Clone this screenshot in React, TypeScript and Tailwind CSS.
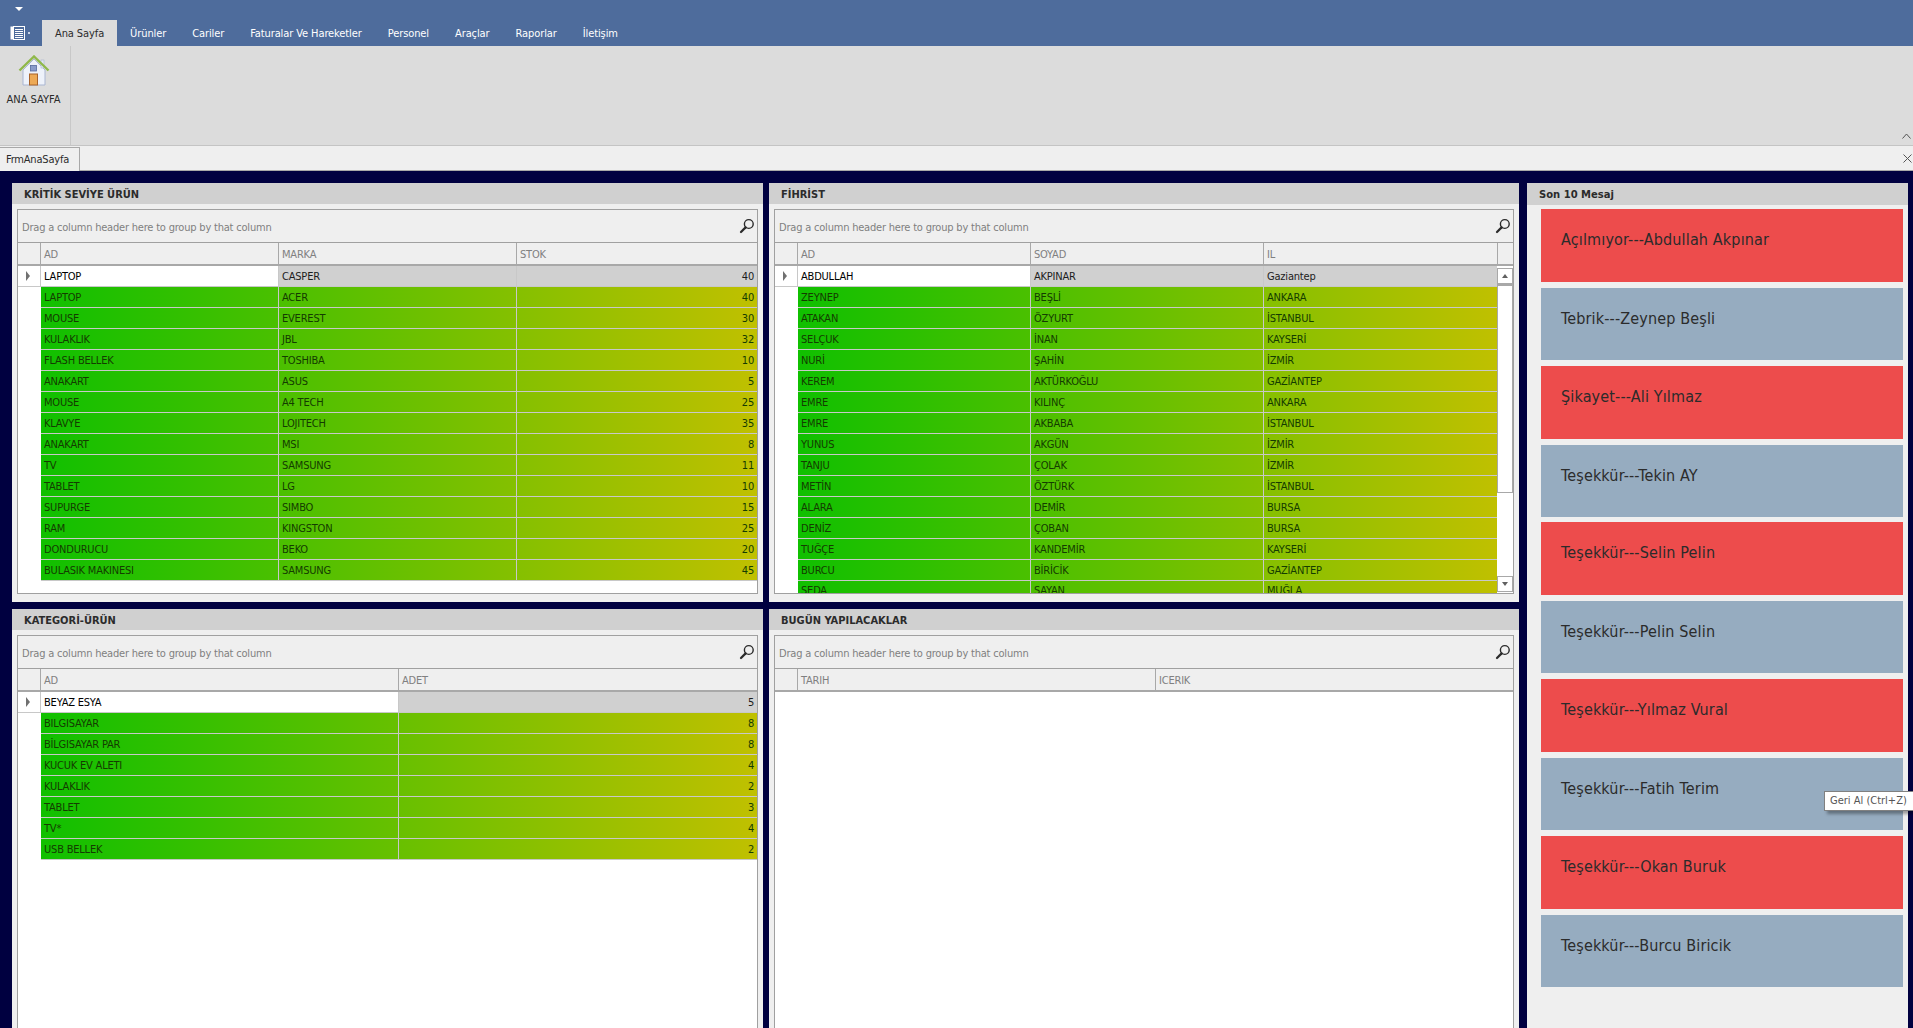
import React from 'react';

const tabs = ['Ürünler', 'Cariler', 'Faturalar Ve Hareketler', 'Personel', 'Araçlar', 'Raporlar', 'İletişim'];

const urunler = [
  ['LAPTOP', 'ACER', '40'], ['MOUSE', 'EVEREST', '30'], ['KULAKLIK', 'JBL', '32'], ['FLASH BELLEK', 'TOSHIBA', '10'],
  ['ANAKART', 'ASUS', '5'], ['MOUSE', 'A4 TECH', '25'], ['KLAVYE', 'LOJITECH', '35'], ['ANAKART', 'MSI', '8'],
  ['TV', 'SAMSUNG', '11'], ['TABLET', 'LG', '10'], ['SUPURGE', 'SIMBO', '15'], ['RAM', 'KINGSTON', '25'],
  ['DONDURUCU', 'BEKO', '20'], ['BULASIK MAKINESI', 'SAMSUNG', '45'],
];

const fihrist = [
  ['ZEYNEP', 'BEŞLİ', 'ANKARA'], ['ATAKAN', 'ÖZYURT', 'İSTANBUL'], ['SELÇUK', 'İNAN', 'KAYSERİ'], ['NURİ', 'ŞAHİN', 'İZMİR'],
  ['KEREM', 'AKTÜRKOĞLU', 'GAZİANTEP'], ['EMRE', 'KILINÇ', 'ANKARA'], ['EMRE', 'AKBABA', 'İSTANBUL'], ['YUNUS', 'AKGÜN', 'İZMİR'],
  ['TANJU', 'ÇOLAK', 'İZMİR'], ['METİN', 'ÖZTÜRK', 'İSTANBUL'], ['ALARA', 'DEMİR', 'BURSA'], ['DENİZ', 'ÇOBAN', 'BURSA'],
  ['TUĞÇE', 'KANDEMİR', 'KAYSERİ'], ['BURCU', 'BİRİCİK', 'GAZİANTEP'],
];

const kategori = [
  ['BILGISAYAR', '8'], ['BİLGISAYAR PAR', '8'], ['KUCUK EV ALETI', '4'], ['KULAKLIK', '2'],
  ['TABLET', '3'], ['TV*', '4'], ['USB BELLEK', '2'],
];

const mesajlar = [
  'Açılmıyor---Abdullah Akpınar', 'Tebrik---Zeynep Beşli', 'Şikayet---Ali Yılmaz', 'Teşekkür---Tekin AY',
  'Teşekkür---Selin Pelin', 'Teşekkür---Pelin Selin', 'Teşekkür---Yılmaz Vural', 'Teşekkür---Fatih Terim',
  'Teşekkür---Okan Buruk', 'Teşekkür---Burcu Biricik',
];

const condensed = "font-['DejaVu_Sans',sans-serif] [font-stretch:condensed]";
const small = `text-[11px] tracking-[-0.2px] ${condensed}`;
const tabText = `text-[11px] tracking-[-0.1px] ${condensed}`;

const SearchIcon = () => (
  <svg width="16" height="16" viewBox="0 0 16 16" fill="none">
    <circle cx="9.8" cy="6" r="4.4" stroke="#2a2a2a" strokeWidth="1.4" />
    <path d="M6.6 9.4 L2 14" stroke="#2a2a2a" strokeWidth="2.2" strokeLinecap="round" />
  </svg>
);

const HomeIcon = () => (
  <svg width="32" height="32" viewBox="0 0 32 32">
    <path d="M5 15 L16 4 L27 15 V30 H5 Z" fill="#eef2fa" stroke="#aab6d2" strokeWidth="1" />
    <rect x="23" y="5" width="3" height="8" fill="#dfe6f2" stroke="#a8b4cc" strokeWidth="0.6" />
    <path d="M1.5 15.5 L16 1.5 L30.5 15.5" fill="none" stroke="#8fb84a" strokeWidth="2.4" />
    <rect x="12.5" y="10.5" width="6" height="5.5" fill="#8a9ccb" stroke="#566a9c" strokeWidth="0.8" />
    <rect x="11.5" y="19" width="8" height="11" fill="#eda955" stroke="#a8622a" strokeWidth="1" />
  </svg>
);

const AppIcon = () => (
  <svg width="15" height="14" viewBox="0 0 15 14" fill="none">
    <rect x="0.5" y="0.5" width="3" height="13" fill="#fff" />
    <rect x="3.5" y="0.5" width="11" height="13" fill="#4e6c9c" stroke="#fff" />
    <path d="M5 3.5 H13 M5 5.5 H13 M5 7.5 H13 M5 9.5 H13 M5 11.5 H13" stroke="#fff" />
  </svg>
);

const Panel = ({ title, children, cls }: { title: string; children: React.ReactNode; cls?: string }) => (
  <div className={`flex min-h-0 flex-col overflow-hidden bg-[#efefef] ${cls ?? ''}`}>
    <div className={`h-[21px] shrink-0 bg-[#d0d0d0] pl-[12px] text-[11px] leading-[23px] font-bold text-[#2b2b2b] ${condensed}`}>
      {title}
    </div>
    {children}
  </div>
);

const GroupBar = () => (
  <div className="flex h-[33px] shrink-0 items-center justify-between border-b border-[#a0a0a0] bg-[#efefef] pr-[2px] pl-[4px]">
    <span className={`mt-[4px] text-[#7f7f7f] ${small}`}>Drag a column header here to group by that column</span>
    <span className="mb-[1px]">
      <SearchIcon />
    </span>
  </div>
);

const Indicator = () => (
  <div className="flex h-full items-center border-r border-[#c8c8c8] bg-white pl-[8px]">
    <span className="h-0 w-0 border-y-[5px] border-l-[4px] border-y-transparent border-l-[#707070]" />
  </div>
);

const Cell = ({ text, cls }: { text: string; cls?: string }) => (
  <div className={`h-full overflow-hidden border-r border-[#c8c8c8] px-[3px] leading-[22px] whitespace-nowrap last:border-r-0 ${small} ${cls ?? ''}`}>
    {text}
  </div>
);

const Header = ({ cols, labels }: { cols: string; labels: string[] }) => (
  <div className={`grid h-[23px] shrink-0 border-b-2 border-[#a8a8a8] bg-[#efefef] ${cols}`}>
    <div className="border-r border-[#a8a8a8]" />
    {labels.map((l, i) => (
      <div key={i} className={`border-r border-[#a8a8a8] pl-[3px] leading-[24px] text-[#808080] last:border-r-0 ${small}`}>
        {l}
      </div>
    ))}
  </div>
);

const Rows = ({ cols, gridCols, first, rows, numeric, tail }: { cols: string; gridCols: string; first: string[]; rows: string[][]; numeric?: boolean; tail?: string[] }) => (
  <div className="min-w-0 flex-1 overflow-hidden">
    <div className={`grid h-[21px] border-b border-[#c8c8c8] ${cols}`}>
      <Indicator />
      {first.map((t, i) => (
        <Cell
          key={i}
          text={t}
          cls={`${i === 0 ? 'bg-white text-black' : 'bg-[#d0d0d0] text-[#1c1c1c]'} ${numeric && i === first.length - 1 ? 'text-right' : ''}`}
        />
      ))}
    </div>
    {rows.map((r, n) => (
      <div key={n} className="flex h-[21px]">
        <div className="w-[23px] shrink-0 bg-white" />
        <div className={`grid flex-1 border-b border-[#c8c8c8] bg-linear-to-r/srgb from-[#10c000] to-[#c0c000] ${gridCols}`}>
          {r.map((t, i) => (
            <Cell key={i} text={t} cls={`text-[#143c00] ${numeric && i === r.length - 1 ? 'text-right' : ''}`} />
          ))}
        </div>
      </div>
    ))}
    {/* last row is only half in view, like in the grid it is scrolled */}
    {tail && (
      <div className="flex h-[13px] overflow-hidden">
        <div className="w-[23px] shrink-0 bg-white" />
        <div className={`grid flex-1 bg-linear-to-r/srgb from-[#10c000] to-[#c0c000] ${gridCols}`}>
          {tail.map((t, i) => (
            <div key={i} className={`h-[13px] border-r border-[#c8c8c8] px-[3px] leading-[20px] text-[#143c00] last:border-r-0 ${small}`}>
              {t}
            </div>
          ))}
        </div>
      </div>
    )}
  </div>
);

const ScrollBar = () => (
  <div className="flex w-[16px] shrink-0 flex-col bg-white pt-[2px] pb-[1px]">
    <div className="flex h-[16px] shrink-0 items-center justify-center border border-[#a8a8a8] bg-white">
      <span className="h-0 w-0 border-x-[3px] border-b-[4px] border-x-transparent border-b-[#606060]" />
    </div>
    <div className="h-[209px] shrink-0 border border-t-2 border-[#a8a8a8] bg-white" />
    <div className="flex-1" />
    <div className="flex h-[16px] shrink-0 items-center justify-center border border-[#a8a8a8] bg-white">
      <span className="h-0 w-0 border-x-[3px] border-t-[4px] border-x-transparent border-t-[#606060]" />
    </div>
  </div>
);

export default function App() {
  return (
    <div className="relative flex h-[1028px] w-[1913px] flex-col overflow-hidden bg-[#000040] font-['DejaVu_Sans',sans-serif]">
      {/* title + ribbon tabs */}
      <div className="h-[46px] shrink-0 bg-[#4e6c9c]">
        <div className="flex h-[20px] pt-[7px] pl-[15px]">
          <span className="h-0 w-0 border-x-[4px] border-t-[4px] border-x-transparent border-t-white" />
        </div>
        <div className="flex h-[26px]">
          <div className="flex w-[42px] items-center gap-[3px] pl-[10px]">
            <AppIcon />
            <span className="h-[2px] w-[2px] bg-[#c8d4e8]" />
          </div>
          <div className={`bg-[#dcdcdc] px-[13px] leading-[28px] text-[#2b2b2b] ${tabText}`}>Ana Sayfa</div>
          {tabs.map((t) => (
            <div key={t} className={`px-[13px] leading-[28px] text-white ${tabText}`}>
              {t}
            </div>
          ))}
        </div>
      </div>

      {/* ribbon */}
      <div className="flex h-[100px] shrink-0 border-b border-[#c4c4c4] bg-[#dcdcdc]">
        <div className="flex w-[71px] flex-col items-center border-r border-[#c8c8c8] pt-[9px] pr-[3px]">
          <HomeIcon />
          <span className={`mt-[5px] text-[11px] text-[#2b2b2b] ${condensed}`}>ANA SAYFA</span>
        </div>
        <div className="flex flex-1 items-end justify-end pr-[2px] pb-[6px]">
          <svg width="9" height="6" viewBox="0 0 9 6" fill="none">
            <path d="M0.5 5.5 L4.5 1 L8.5 5.5" stroke="#555" />
          </svg>
        </div>
      </div>

      {/* document tabs */}
      <div className="flex h-[25px] shrink-0 border-b border-[#a8a8a8] bg-[#efefef] pt-[1px]">
        <div className={`-mb-px w-[80px] border-t border-r border-[#a8a8a8] bg-[#efefef] pl-[6px] leading-[23px] text-[#2b2b2b] ${small}`}>
          FrmAnaSayfa
        </div>
        <div className="flex flex-1 items-center justify-end pr-[1px]">
          <svg width="9" height="9" viewBox="0 0 9 9" fill="none">
            <path d="M0.5 0.5 L8.5 8.5 M8.5 0.5 L0.5 8.5" stroke="#555" />
          </svg>
        </div>
      </div>

      {/* content */}
      <div className="grid min-h-0 flex-1 grid-cols-[751px_756px_389px] grid-rows-[419px_419px] gap-y-[7px] pt-[12px] pl-[12px]">
        <Panel title="KRİTİK SEVİYE ÜRÜN">
          <div className="mx-[5px] mt-[5px] mb-[8px] flex flex-1 flex-col overflow-hidden border border-[#a0a0a0] bg-white">
            <GroupBar />
            <Header cols="grid-cols-[23px_238px_238px_1fr]" labels={['AD', 'MARKA', 'STOK']} />
            <Rows
              cols="grid-cols-[23px_238px_238px_1fr]"
              gridCols="grid-cols-[238px_238px_1fr]"
              first={['LAPTOP', 'CASPER', '40']}
              rows={urunler}
              numeric
            />
          </div>
        </Panel>

        <Panel title="FİHRİST" cls="ml-[6px]">
          <div className="mx-[5px] mt-[5px] mb-[8px] flex min-h-0 flex-1 flex-col overflow-hidden border border-[#a0a0a0] bg-white">
            <GroupBar />
            <Header cols="grid-cols-[23px_233px_233px_234px_1fr]" labels={['AD', 'SOYAD', 'IL', '']} />
            <div className="flex min-h-0 flex-1">
              <Rows
                cols="grid-cols-[23px_233px_233px_1fr]"
                gridCols="grid-cols-[233px_233px_1fr]"
                first={['ABDULLAH', 'AKPINAR', 'Gaziantep']}
                rows={fihrist}
                tail={['SEDA', 'SAYAN', 'MUĞLA']}
              />
              <ScrollBar />
            </div>
          </div>
        </Panel>

        <div className="row-span-2 ml-[8px] flex flex-col bg-[#efefef]">
          <div className="h-[22px] shrink-0 bg-[#d0d0d0] pl-[12px] text-[10px] leading-[23px] font-bold text-[#2b2b2b]">Son 10 Mesaj</div>
          <div className="flex flex-col gap-[6px] pt-[4px] pr-[5px] pl-[14px]">
            {mesajlar.map((m, i) => (
              <div
                key={m}
                className={`pt-[19px] pl-[20px] text-[16px] leading-[24px] tracking-[0.15px] text-[#2b2b2b] ${condensed} ${i % 2 === 0 ? 'h-[73px] bg-[#ed4c4c]' : 'h-[72px] bg-[#96acc0]'} ${i === 4 ? '-mt-px' : ''}`}
              >
                {m}
              </div>
            ))}
          </div>
        </div>

        <Panel title="KATEGORİ-ÜRÜN">
          <div className="mx-[5px] mt-[5px] flex flex-1 flex-col overflow-hidden border border-b-0 border-[#a0a0a0] bg-white">
            <GroupBar />
            <Header cols="grid-cols-[23px_358px_1fr]" labels={['AD', 'ADET']} />
            <Rows
              cols="grid-cols-[23px_358px_1fr]"
              gridCols="grid-cols-[358px_1fr]"
              first={['BEYAZ ESYA', '5']}
              rows={kategori}
              numeric
            />
          </div>
        </Panel>

        <Panel title="BUGÜN YAPILACAKLAR" cls="ml-[6px]">
          <div className="mx-[5px] mt-[5px] flex flex-1 flex-col overflow-hidden border border-b-0 border-[#a0a0a0] bg-white">
            <GroupBar />
            <Header cols="grid-cols-[23px_358px_1fr]" labels={['TARIH', 'ICERIK']} />
            <div className="flex-1 bg-white" />
          </div>
        </Panel>
      </div>

      {/* tooltip */}
      <div className={`absolute top-[791px] left-[1824px] flex h-[20px] w-[95px] items-center border border-[#808080] bg-white pl-[5px] text-[11px] text-[#555] shadow-[3px_3px_3px_rgba(0,0,0,0.35)] ${condensed}`}>
        Geri Al (Ctrl+Z)
      </div>
    </div>
  );
}
